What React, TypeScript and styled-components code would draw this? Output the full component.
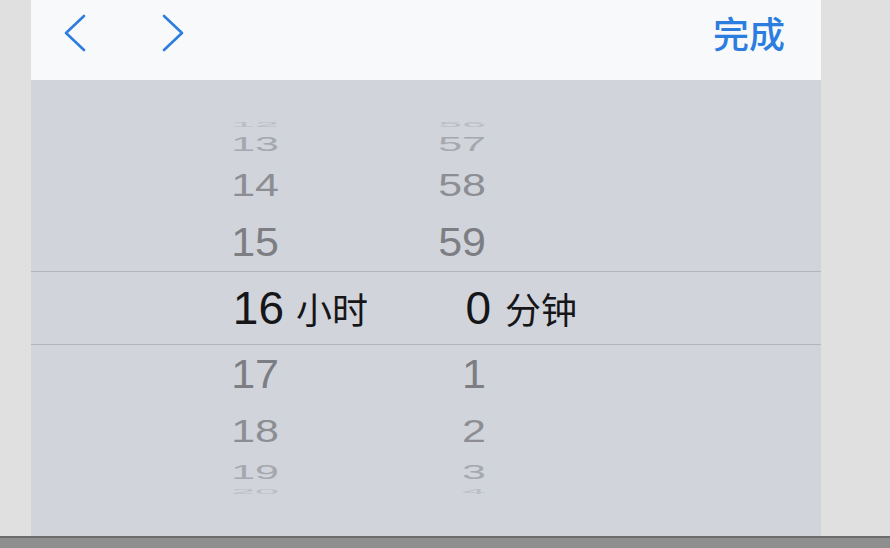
import React from "react";
import styled, { createGlobalStyle } from "styled-components";

const GlobalStyle = createGlobalStyle`
  html, body {
    margin: 0;
    padding: 0;
    background: #e0e0e0;
    overflow: hidden;
  }
  * { box-sizing: border-box; }
`;

const Screen = styled.div`
  width: 890px;
  height: 548px;
  display: flex;
  flex-direction: column;
  background: #e0e0e0;
`;

const Stage = styled.div`
  flex: 1;
  display: flex;
  padding-left: 31px;
`;

const Panel = styled.div`
  width: 790px;
  display: flex;
  flex-direction: column;
`;

const Toolbar = styled.div`
  height: 80px;
  flex: none;
  display: flex;
  align-items: center;
  padding: 0 36px 14px 32px;
  background: #f8f9fa;
`;

const NavGroup = styled.div`
  display: flex;
  align-items: center;
  gap: 74px;
`;

const NavButton = styled.button`
  width: 24px;
  height: 40px;
  padding: 0;
  border: none;
  background: none;
  display: flex;
  color: #2c7de0;
  cursor: pointer;
`;

const DoneButton = styled.button`
  margin-left: auto;
  margin-bottom: 2px;
  padding: 0;
  border: none;
  background: none;
  font-family: "Noto Sans CJK SC", "Noto Sans", sans-serif;
  font-size: 36px;
  font-weight: 500;
  line-height: 1;
  color: #2c7de0;
  cursor: pointer;
`;

const Picker = styled.div`
  position: relative;
  flex: 1;
  display: flex;
  align-items: center;
  padding-left: 153px;
  background: #d1d4db;
`;

const SelectionBand = styled.div`
  position: absolute;
  left: 0;
  right: 0;
  top: 191px;
  height: 74px;
  border-top: 1px solid #b3b5bb;
  border-bottom: 1px solid #b3b5bb;
  pointer-events: none;
`;

const Wheels = styled.div`
  display: flex;
  gap: 15px;
`;

const Wheel = styled.div`
  display: flex;
  flex-direction: column;
`;

const Row = styled.div<{ $h: number }>`
  height: ${(p) => p.$h}px;
  display: flex;
  align-items: center;
`;

const Line = styled.div<{ $gap: number }>`
  display: flex;
  align-items: baseline;
  gap: ${(p) => p.$gap}px;
`;

const Num = styled.span<{ $size: number; $scale: number; $color: string; $inset: number }>`
  display: inline-block;
  width: 100px;
  padding-right: ${(p) => p.$inset}px;
  text-align: right;
  font-family: "Liberation Sans", Arial, sans-serif;
  font-size: ${(p) => p.$size}px;
  line-height: 1;
  color: ${(p) => p.$color};
  transform: scaleY(${(p) => p.$scale});
  transform-origin: center;
`;

const Unit = styled.span`
  display: inline-block;
  width: 80px;
  font-family: "Noto Sans CJK SC", "Noto Sans", sans-serif;
  font-size: 36px;
  line-height: 1;
  color: #161618;
`;

const BottomBar = styled.div`
  height: 12px;
  flex: none;
  background: #8f8f8f;
  border-top: 2px solid #6c6c6c;
`;

const levels = [
  { h: 66, scale: 1, color: "#161618", size: 46 },
  { h: 66, scale: 0.94, color: "#7c7e84", size: 43 },
  { h: 48, scale: 0.73, color: "#8c8e94", size: 43 },
  { h: 34, scale: 0.47, color: "#a6a8ae", size: 43 },
  { h: 5, scale: 0.16, color: "#bcbec4", size: 43 },
];

type WheelProps = { values: number[]; selected: number; unit: string; gap: number };

function WheelColumn({ values, selected, unit, gap }: WheelProps) {
  return (
    <Wheel>
      {values.map((v, i) => {
        const d = Math.abs(i - selected);
        const lv = levels[d];
        return (
          <Row key={i} $h={lv.h}>
            <Line $gap={gap}>
              <Num $size={lv.size} $scale={lv.scale} $color={lv.color} $inset={d === 0 ? 0 : 5}>
                {v}
              </Num>
              <Unit>{d === 0 ? unit : ""}</Unit>
            </Line>
          </Row>
        );
      })}
    </Wheel>
  );
}

function Chevron({ dir }: { dir: "left" | "right" }) {
  const pts = dir === "left" ? "21,3 3,20 21,37" : "3,3 21,20 3,37";
  return (
    <svg width="24" height="40" viewBox="0 0 24 40" fill="none">
      <polyline
        points={pts}
        stroke="currentColor"
        strokeWidth="2.6"
        strokeLinecap="round"
        strokeLinejoin="round"
      />
    </svg>
  );
}

export default function App() {
  const hours = [12, 13, 14, 15, 16, 17, 18, 19, 20];
  const minutes = [56, 57, 58, 59, 0, 1, 2, 3, 4];
  return (
    <Screen>
      <GlobalStyle />
      <Stage>
        <Panel>
          <Toolbar>
            <NavGroup>
              <NavButton aria-label="上一项">
                <Chevron dir="left" />
              </NavButton>
              <NavButton aria-label="下一项">
                <Chevron dir="right" />
              </NavButton>
            </NavGroup>
            <DoneButton>完成</DoneButton>
          </Toolbar>
          <Picker>
            <Wheels>
              <WheelColumn values={hours} selected={4} unit="小时" gap={12} />
              <WheelColumn values={minutes} selected={4} unit="分钟" gap={14} />
            </Wheels>
            <SelectionBand />
          </Picker>
        </Panel>
      </Stage>
      <BottomBar />
    </Screen>
  );
}
